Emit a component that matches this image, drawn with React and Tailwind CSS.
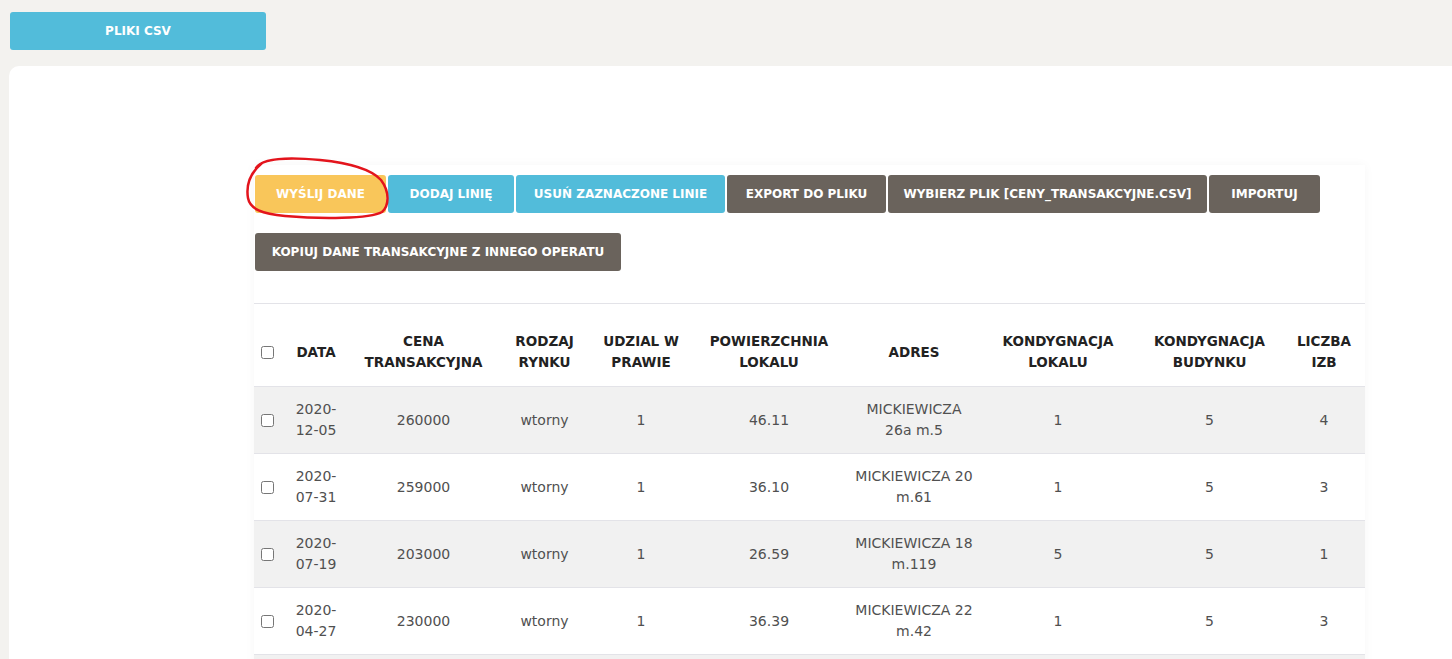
import React from "react";

const rows = [
  { d1: "2020-", d2: "12-05", cena: "260000", rynek: "wtorny", udzial: "1", pow: "46.11", a1: "MICKIEWICZA", a2: "26a m.5", kl: "1", kb: "5", izb: "4" },
  { d1: "2020-", d2: "07-31", cena: "259000", rynek: "wtorny", udzial: "1", pow: "36.10", a1: "MICKIEWICZA 20", a2: "m.61", kl: "1", kb: "5", izb: "3" },
  { d1: "2020-", d2: "07-19", cena: "203000", rynek: "wtorny", udzial: "1", pow: "26.59", a1: "MICKIEWICZA 18", a2: "m.119", kl: "5", kb: "5", izb: "1" },
  { d1: "2020-", d2: "04-27", cena: "230000", rynek: "wtorny", udzial: "1", pow: "36.39", a1: "MICKIEWICZA 22", a2: "m.42", kl: "1", kb: "5", izb: "3" },
];

const btn =
  "h-[38px] rounded-[3px] text-white font-bold text-[12px] flex items-center justify-center whitespace-nowrap";

export default function App() {
  return (
    <div className="relative h-[659px] overflow-hidden bg-[#f3f2ef] font-['DejaVu_Sans',sans-serif]">
      <div className="pl-[10px] pt-[12px]">
        <button className={`${btn} w-[256px] bg-[#52bcda]`}>PLIKI CSV</button>
      </div>
      <div className="ml-[9px] mt-[16px] min-h-[700px] rounded-tl-[10px] bg-white pl-[245px] pt-[99px]">
        <div className="w-[1111px] bg-white pt-[10px] shadow-[0_0_10px_rgba(0,0,0,0.04)]">
          <div className="flex flex-wrap gap-x-[2px] gap-y-[20px] pl-[1px] pr-[40px]">
            <button className={`${btn} w-[131px] bg-[#f9c65a]`}>WYŚLIJ DANE</button>
            <button className={`${btn} w-[126px] bg-[#52bcda]`}>DODAJ LINIĘ</button>
            <button className={`${btn} w-[209px] bg-[#52bcda]`}>USUŃ ZAZNACZONE LINIE</button>
            <button className={`${btn} w-[159px] bg-[#6a635c]`}>EXPORT DO PLIKU</button>
            <button className={`${btn} w-[319px] bg-[#6a635c]`}>WYBIERZ PLIK [CENY_TRANSAKCYJNE.CSV]</button>
            <button className={`${btn} w-[111px] bg-[#6a635c]`}>IMPORTUJ</button>
            <button className={`${btn} w-[366px] bg-[#6a635c]`}>KOPIUJ DANE TRANSAKCYJNE Z INNEGO OPERATU</button>
          </div>
          <table className="mt-[32px] w-[1111px] table-fixed border-collapse border-t border-[#e3e3e8] text-center">
            <colgroup>
              <col className="w-[28px]" />
              <col className="w-[68px]" />
              <col className="w-[147px]" />
              <col className="w-[95px]" />
              <col className="w-[98px]" />
              <col className="w-[158px]" />
              <col className="w-[132px]" />
              <col className="w-[156px]" />
              <col className="w-[147px]" />
              <col className="w-[82px]" />
            </colgroup>
            <thead>
              <tr className="border-b border-[#e3e3e8] text-[13.5px] font-bold leading-[21px] text-[#222]">
                <th className="pl-[7px] pt-[27px] pb-[13px] text-left align-middle">
                  <input type="checkbox" className="m-0 block h-[13px] w-[13px]" />
                </th>
                <th className="pt-[27px] pb-[13px]">DATA</th>
                <th className="pt-[27px] pb-[13px]">CENA<br />TRANSAKCYJNA</th>
                <th className="pt-[27px] pb-[13px]">RODZAJ<br />RYNKU</th>
                <th className="pt-[27px] pb-[13px]">UDZIAL W<br />PRAWIE</th>
                <th className="pt-[27px] pb-[13px]">POWIERZCHNIA<br />LOKALU</th>
                <th className="pt-[27px] pb-[13px]">ADRES</th>
                <th className="pt-[27px] pb-[13px]">KONDYGNACJA<br />LOKALU</th>
                <th className="pt-[27px] pb-[13px]">KONDYGNACJA<br />BUDYNKU</th>
                <th className="pt-[27px] pb-[13px]">LICZBA<br />IZB</th>
              </tr>
            </thead>
            <tbody>
              {rows.map((r, i) => (
                <tr
                  key={i}
                  className={`border-b border-[#e3e3e8] text-[14px] font-normal leading-[21px] text-[#505050] ${
                    i % 2 === 0 ? "bg-[#f1f1f1]" : "bg-white"
                  }`}
                >
                  <td className="py-[12px] pl-[7px] text-left align-middle">
                    <input type="checkbox" className="m-0 block h-[13px] w-[13px]" />
                  </td>
                  <td className="py-[12px]">{r.d1}<br />{r.d2}</td>
                  <td className="py-[12px]">{r.cena}</td>
                  <td className="py-[12px]">{r.rynek}</td>
                  <td className="py-[12px]">{r.udzial}</td>
                  <td className="py-[12px]">{r.pow}</td>
                  <td className="py-[12px]">{r.a1}<br />{r.a2}</td>
                  <td className="py-[12px]">{r.kl}</td>
                  <td className="py-[12px]">{r.kb}</td>
                  <td className="py-[12px]">{r.izb}</td>
                </tr>
              ))}
              <tr className="bg-[#f1f1f1]">
                <td colSpan={10} className="h-[66px]"></td>
              </tr>
            </tbody>
          </table>
        </div>
      </div>
      <svg
        className="pointer-events-none absolute left-0 top-0"
        width="1452"
        height="659"
        viewBox="0 0 1452 659"
        fill="none"
      >
        <path
          d="M256 168 C 262 158, 290 157, 320 160 C 350 163, 372 170, 381 180 C 390 192, 389 206, 382 212 C 370 219, 320 219, 285 216 C 262 214, 250 209, 248 198 C 246 186, 249 174, 262 163"
          stroke="#e3141c"
          strokeWidth="2.5"
          strokeLinecap="round"
        />
      </svg>
    </div>
  );
}
